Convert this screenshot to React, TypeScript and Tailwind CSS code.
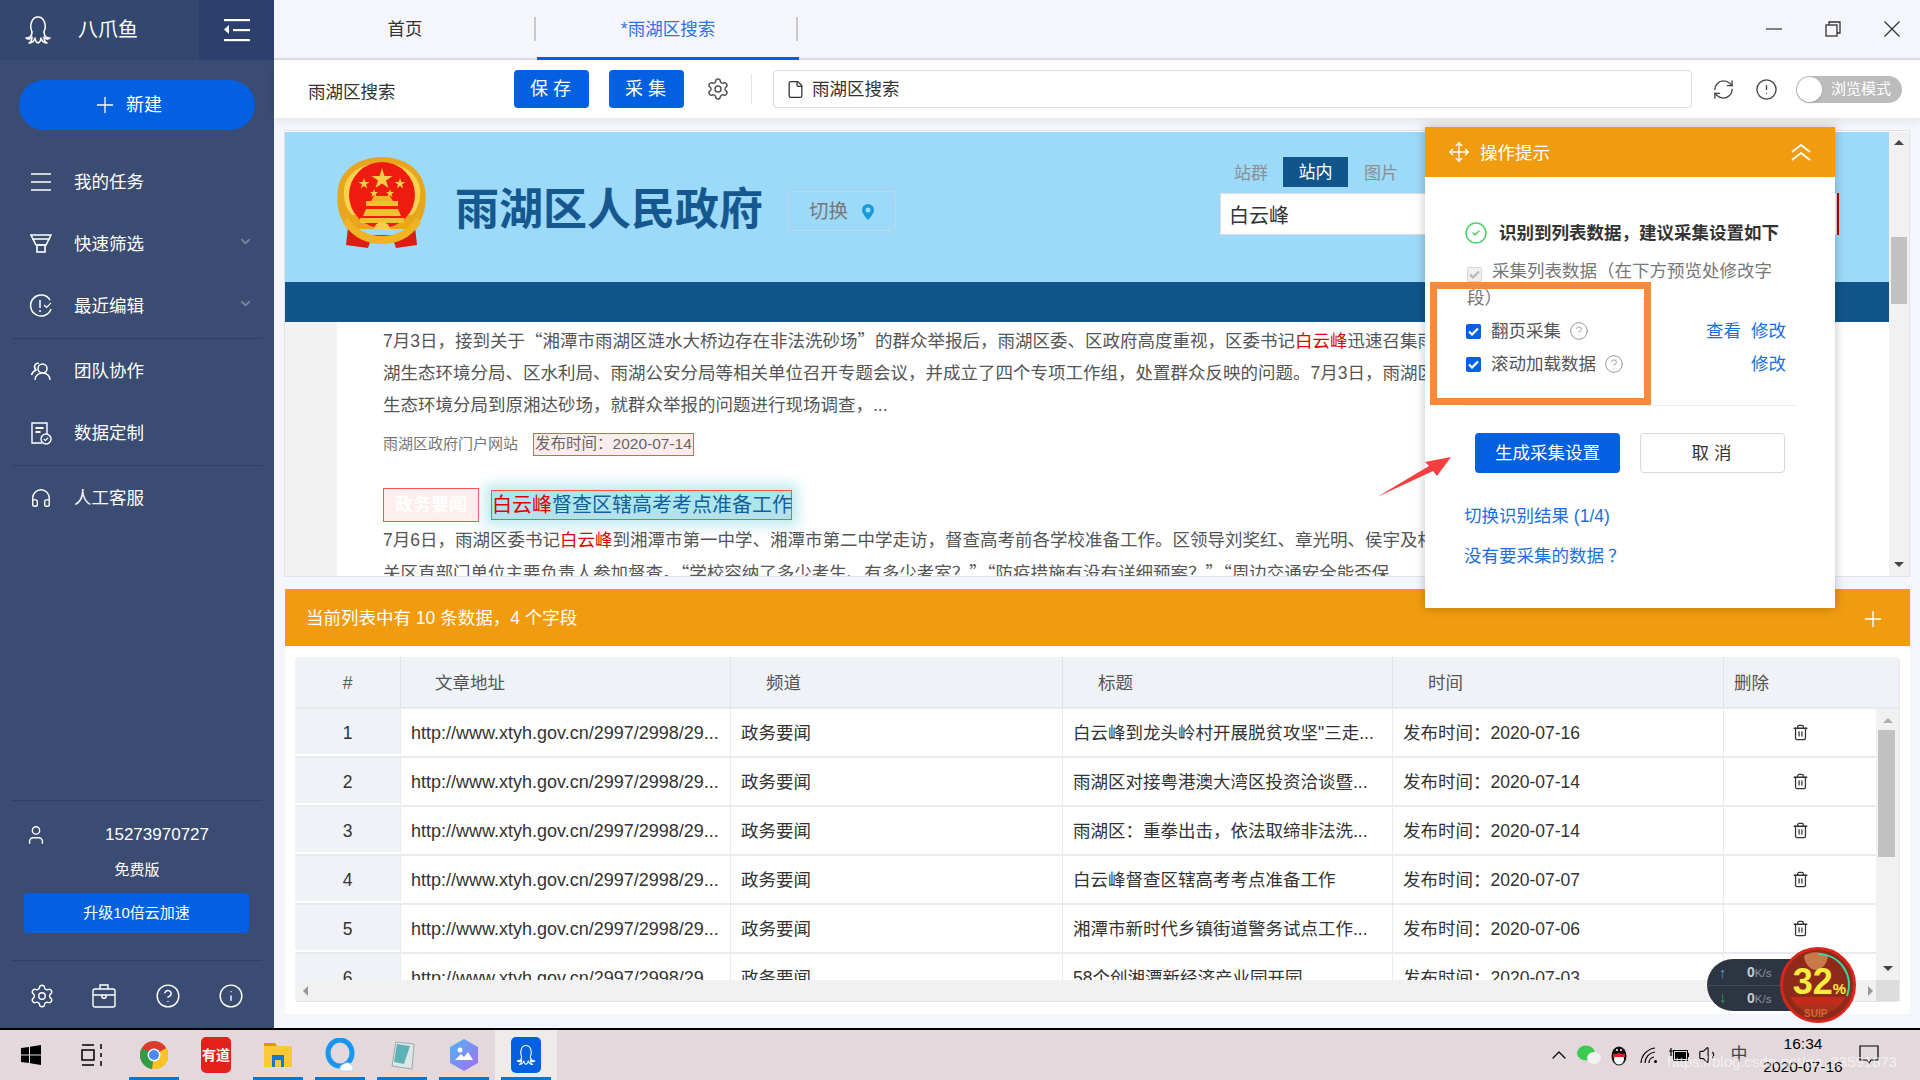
import { ChevronDown, CircleCheck, CircleHelp, CircleAlert, Info, Move, Plus, RefreshCw, Settings, Trash2, User, File, Headphones, ChevronUp, Volume1 } from 'lucide-react'

const Octopus = ({ size = 30 }: { size?: number }) => (
    <svg width={size} height={size} viewBox="0 0 30 30" fill="none" stroke="white" strokeWidth="1.5" strokeLinecap="round" strokeLinejoin="round">
        <path d="M9 17C6 10 9 2 15 2s9 8 6 15" />
        <path d="M9 17c0 4-2 6-6 6 2 2 5 1 6-1 0 3-1 5-3 6 3 0 5-2 6-5 0 2 1 4 3 5 2-1 3-3 3-5 1 3 3 5 6 5-2-1-3-3-3-6 1 2 4 3 6 1-4 0-6-2-6-6" />
    </svg>
)

const SidebarToggle = () => (
    <svg width="28" height="24" viewBox="0 0 28 24" fill="white">
        <rect x="1" y="1" width="26" height="2.2" />
        <rect x="10" y="11" width="17" height="2.2" />
        <rect x="1" y="21" width="26" height="2.2" />
        <path d="M6 7v9l-5-4.5z" />
    </svg>
)

const ListIcon = () => (
    <svg width="22" height="20" viewBox="0 0 22 20" fill="none" stroke="white" strokeWidth="1.6">
        <path d="M1 2h20M1 10h20M1 18h20" />
    </svg>
)

const FunnelIcon = () => (
    <svg width="22" height="20" viewBox="0 0 22 20" fill="none" stroke="white" strokeWidth="1.6">
        <path d="M1 1h20l-5 10H6zM2 5h18" />
        <rect x="7" y="11" width="8" height="7" />
    </svg>
)

const RecentIcon = () => (
    <svg width="24" height="24" viewBox="0 0 24 24" fill="none" stroke="white" strokeWidth="1.5">
        <path d="M21 6A10.5 10.5 0 1 0 22 15" />
        <path d="M11 6v8M11 16v2" />
        <path d="M15 11l2.500 2.500L22 9" strokeWidth="1.200" />
    </svg>
)

const TeamIcon = () => (
    <svg width="22" height="22" viewBox="0 0 22 22" fill="none" stroke="white" strokeWidth="1.5">
        <circle cx="12.500" cy="8.500" r="4.500" />
        <path d="M5 20c0-4 3-7 7.500-7s7.500 3 7.500 7" />
        <path d="M9 3.500A3.500 3.500 0 0 0 5 5c-1 2 0 4 1 5-2 1-4 3-4.500 5" />
    </svg>
)

const ReportIcon = () => (
    <svg width="22" height="24" viewBox="0 0 22 24" fill="none" stroke="white" strokeWidth="1.4">
        <path d="M12 22H2V2h15v11" />
        <path d="M5.500 7h8M5.500 11h5" strokeWidth="1.800" />
        <circle cx="16" cy="18" r="5" />
        <path d="M13.800 18l1.600 1.600 2.800-3" strokeWidth="1.200" />
    </svg>
)

const CaseIcon = () => (
    <svg width="24" height="26" viewBox="0 0 24 26" fill="none" stroke="white" strokeWidth="1.400">
        <rect x="1" y="6" width="22" height="18" rx="2" />
        <path d="M8 6V2h8v4M1 12h22" />
        <path d="M10 12v2.500l2 1 2-1V12" />
    </svg>
)

const Emblem = () => (
    <svg width="91" height="95" viewBox="0 0 91 95">
        <path d="M13 72C2 62 0 45 2 32 5 12 24 0 46 0s40 12 43 32c2 13 0 30-11 40z" fill="#e8a61c" />
        <path d="M8 32C10 16 26 6 46 6s36 10 38 26c1 10-2 20-8 26H16C10 52 7 42 8 32z" fill="#f9d24f" />
        <circle cx="46" cy="38" r="33" fill="#ee1b0f" />
        <path d="M12 70 10 88l22 3 3-9h22l3 9 21-3-2-18-16 8H30z" fill="#dd1d12" />
        <path d="M11 60c10 14 22 19 35 19s25-5 35-19l4 6C74 82 60 87 46 87S18 82 7 66z" fill="#f0b323" />
        <path d="M30 52h32l3 7H27z" fill="#f3c12e" />
        <rect x="30" y="44" width="32" height="5" fill="#f3c12e" />
        <path d="M35 44l3-5h16l3 5z" fill="#f0b323" />
        <rect x="24" y="61" width="44" height="5" fill="#f3c12e" />
        <path d="M38 73a8 8 0 0 1 16 0z" fill="#f8cf4a" />
        <polygon points="46,11 48.500,19 56.500,19 50,23.500 52.500,31 46,26.500 39.500,31 42,23.500 35.500,19 43.500,19" fill="#f6cd45" />
        <polygon points="28,21 29.300,25 33.500,25 30,27.500 31.300,31.500 28,29 24.700,31.500 26,27.500 22.500,25 26.700,25" fill="#f6cd45" />
        <polygon points="64,21 65.300,25 69.500,25 66,27.500 67.300,31.500 64,29 60.700,31.500 62,27.500 58.500,25 62.700,25" fill="#f6cd45" />
        <polygon points="38,32 39,35 42,35 39.700,37 40.500,40 38,38.200 35.500,40 36.300,37 34,35 37,35" fill="#f6cd45" />
        <polygon points="54,32 55,35 58,35 55.700,37 56.500,40 54,38.200 51.500,40 52.300,37 50,35 53,35" fill="#f6cd45" />
    </svg>
)

const Check = ({ disabled = false }: { disabled?: boolean }) => (
    <span className={`inline-flex w-[15px] h-[15px] shrink-0 rounded-[2px] items-center justify-center ${disabled ? 'bg-[#f0f0f0] border border-[#d5d5d5]' : 'bg-[#0360e0]'}`}>
        <svg width="11" height="9" viewBox="0 0 11 9" fill="none" stroke={disabled ? '#b8b8b8' : 'white'} strokeWidth="2.200">
            <path d="M1 4.500l3 3 6-6" />
        </svg>
    </span>
)

const navTop = [
    { label: '我的任务', icon: <ListIcon /> },
    { label: '快速筛选', icon: <FunnelIcon />, arrow: true },
    { label: '最近编辑', icon: <RecentIcon />, arrow: true },
]

const NavItem = ({ label, icon, arrow }: { label: string; icon: React.ReactNode; arrow?: boolean }) => (
    <div className="h-[62px] flex items-center relative text-white text-[17.500px] font-normal">
        <div className="w-[74px] shrink-0 pl-[16px]">
            <div className="w-[50px] flex justify-center">{icon}</div>
        </div>
        <span>{label}</span>
        {arrow && <ChevronDown size={15} strokeWidth={2.500} className="absolute right-[21px] top-[21px] text-[#7d8aa5]" />}
    </div>
)

const Sidebar = () => (
    <aside className="w-[274px] shrink-0 bg-[#3a4c72] flex flex-col">
        <div className="h-[60px] flex bg-[#34476e]">
            <div className="flex-1 flex items-center pl-[23px]">
                <Octopus />
                <span className="ml-[25px] text-white text-[20px]">八爪鱼</span>
            </div>
            <div className="w-[75px] bg-[#2d3f6c] flex items-center justify-center">
                <SidebarToggle />
            </div>
        </div>
        <button className="mt-[20px] mx-[19px] h-[50px] rounded-full bg-[#0360e0] text-white text-[18px] flex items-center justify-center gap-[8px] pr-[20px]">
            <Plus size={26} strokeWidth={1.200} />
            新建
        </button>
        <div className="mt-[21px]">
            {navTop.map((item) => <NavItem key={item.label} {...item} />)}
        </div>
        <div className="mx-[12px] mt-[1px] h-px bg-[#2f3f62]" />
        <div className="mt-[1px]">
            <NavItem label="团队协作" icon={<TeamIcon />} />
            <NavItem label="数据定制" icon={<ReportIcon />} />
        </div>
        <div className="mx-[12px] mt-[1px] mb-[1px] h-px bg-[#2f3f62]" />
        <NavItem label="人工客服" icon={<Headphones size={22} strokeWidth={1.500} />} />
        <div className="mt-auto">
            <div className="mx-[12px] h-px bg-[#2f3f62]" />
            <div className="mt-[21px] h-[26px] flex items-center text-white text-[17px]">
                <User size={22} strokeWidth={1.500} className="ml-[25px]" />
                <span className="ml-[58px]">15273970727</span>
            </div>
            <div className="mt-[9px] h-[26px] leading-[26px] text-center text-white text-[15px]">免费版</div>
            <button className="mt-[10px] ml-[24px] w-[225px] h-[40px] rounded-[4px] bg-[#0360e0] text-white text-[15px] block">升级10倍云加速</button>
            <div className="mx-[12px] mt-[27px] h-px bg-[#2f3f62]" />
            <div className="mt-[17px] mb-[14px] h-[36px] flex items-center text-white pl-[29px] gap-[37px]">
                <Settings size={26} strokeWidth={1.300} />
                <CaseIcon />
                <CircleHelp size={26} strokeWidth={1.300} className="ml-[2px]" />
                <Info size={26} strokeWidth={1.300} />
            </div>
        </div>
    </aside>
)

const TopTabs = () => (
    <div className="h-[60px] flex items-center border-b-2 border-[#dcdde3] bg-[#f5f6fb] relative">
        <div className="w-[262px] h-[24px] flex items-center justify-center border-r-2 border-[#c8c8c8] text-[17.500px] text-[#333] pl-[2px]">首页</div>
        <div className="w-[262px] h-[24px] flex items-center justify-center border-r-2 border-[#c8c8c8] text-[17.500px] text-[#2c73e6] pl-[4px]">*雨湖区搜索</div>
        <div className="absolute left-[263px] bottom-[-2px] w-[262px] h-[3px] bg-[#0360e0]" />
        <div className="ml-auto flex items-center gap-[43px] pr-[20px] text-[#333]">
            <svg width="16" height="16" viewBox="0 0 16 16" stroke="currentColor" strokeWidth="1.200">
                <path d="M0 8h16" />
            </svg>
            <svg width="16" height="16" viewBox="0 0 16 16" fill="none" stroke="currentColor" strokeWidth="1.300">
                <rect x="1" y="4" width="11" height="11" />
                <path d="M4 4V1h11v11h-3" />
            </svg>
            <svg width="16" height="16" viewBox="0 0 16 16" stroke="currentColor" strokeWidth="1.300">
                <path d="M0.500 0.500l15 15M15.500 0.500l-15 15" />
            </svg>
        </div>
    </div>
)

const Toolbar = () => (
    <div className="h-[58px] bg-white flex items-center pl-[34px] shadow-[0_3px_8px_rgba(0,0,0,0.08)] relative">
        <div className="w-[206px] text-[17.500px] text-[#333] pt-[6px]">雨湖区搜索</div>
        <div className="flex gap-[20px]">
            <button className="w-[75px] h-[38px] rounded-[4px] bg-[#0360e0] text-white text-[18px] tracking-[5px] pl-[3px]">保存</button>
            <button className="w-[75px] h-[38px] rounded-[4px] bg-[#0360e0] text-white text-[18px] tracking-[5px] pl-[3px]">采集</button>
        </div>
        <Settings size={24} strokeWidth={1.500} className="ml-[22px] text-[#555]" />
        <div className="ml-[21px] w-px h-[30px] bg-[#e4e4e4]" />
        <div className="ml-[21px] w-[919px] h-[38px] rounded-[4px] border border-[#dcdcdc] flex items-center pl-[12px] text-[17.500px] text-[#333]">
            <File size={19} strokeWidth={1.600} />
            <span className="ml-[7px]">雨湖区搜索</span>
        </div>
        <RefreshCw size={23} strokeWidth={1.400} className="ml-[20px] text-[#444]" />
        <CircleAlert size={23} strokeWidth={1.400} className="ml-[20px] text-[#444]" />
        <div className="ml-[18px] w-[106px] h-[27px] rounded-full bg-[#bcbcbc] flex items-center">
            <span className="w-[25px] h-[25px] rounded-full bg-white ml-px shadow" />
            <span className="ml-[9px] text-white text-[15px]">浏览模式</span>
        </div>
    </div>
)

const Hit = () => <span className="text-[#e00000]">白云峰</span>

// curly quotes need the CJK face, Liberation draws them half width
const Q = ({ children }: { children: string }) => <span className="font-['Noto_Sans_CJK_SC',sans-serif]">{children}</span>

const SitePreview = () => (
    <div className="mt-[12px] ml-[10px] mr-[10px] h-[447px] border border-[#dfe3ee] pt-px flex bg-white overflow-hidden">
        <div className="flex-1 min-w-0 flex flex-col">
            <div className="h-[150px] shrink-0 bg-[#9dd9f8] flex items-start">
                <div className="ml-[51px] mt-[25px]"><Emblem /></div>
                <div className="ml-[28px] mt-[48px] text-[44px] leading-[60px] font-bold text-[#15588f] whitespace-nowrap">雨湖区人民政府</div>
                <div className="ml-[25px] mt-[59px] w-[108px] h-[40px] rounded-[4px] border border-[#c7d6e0] flex items-center pl-[20px] pt-[1px] text-[19.500px] text-[#777]">
                    切换
                    <svg className="ml-[14px]" width="12" height="16" viewBox="0 0 12 16">
                        <path fillRule="evenodd" d="M6 0a6 6 0 0 1 6 6c0 4-6 10-6 10S0 10 0 6a6 6 0 0 1 6-6zm0 3.500a2.500 2.500 0 1 0 0 5 2.500 2.500 0 0 0 0-5z" fill="#1b9ad8" />
                    </svg>
                </div>
                <div className="ml-[324px] w-[619px] pt-[25px]">
                    <div className="flex items-center h-[30px] text-[17px] text-[#8a8f93]">
                        <span className="ml-[14px] pt-[3px]">站群</span>
                        <span className="ml-[15px] w-[65px] h-[30px] bg-[#11568a] text-white flex items-center justify-center pt-[2px]">站内</span>
                        <span className="ml-[16px] pt-[3px]">图片</span>
                    </div>
                    <div className="mt-[6px] h-[42px] flex">
                        <div className="flex-1 bg-white border border-[#dcdcdc] pl-[8px] pt-[4px] flex items-center text-[20px] text-[#333]">白云峰</div>
                        <div className="w-[2px] bg-[#b70000]" />
                    </div>
                </div>
            </div>
            <div className="h-[40px] shrink-0 bg-[#11568a]" />
            <div className="flex-1 min-h-0 flex">
                <div className="w-[52px] shrink-0 bg-[#f2f2f2]" />
                <div className="flex-1 min-w-0 pl-[46px] text-[17.500px] leading-[32px] text-[#555] whitespace-nowrap overflow-hidden">
                    <div className="mt-[2px]">7月3日，接到关于<Q>“</Q>湘潭市雨湖区涟水大桥边存在非法洗砂场<Q>”</Q>的群众举报后，雨湖区委、区政府高度重视，区委书记<Hit />迅速召集雨</div>
                    <div>湖生态环境分局、区水利局、雨湖公安分局等相关单位召开专题会议，并成立了四个专项工作组，处置群众反映的问题。7月3日，雨湖区</div>
                    <div>生态环境分局到原湘达砂场，就群众举报的问题进行现场调查，...</div>
                    <div className="mt-[11px] h-[24px] flex items-center text-[15px] leading-[22px] text-[#777]">
                        <span>雨湖区政府门户网站</span>
                        <span className="ml-[15px] h-[23px] px-px border border-[#ff5050] bg-[#ffecec] text-[15.500px] text-[#666] flex items-center">发布时间：2020-07-14</span>
                    </div>
                    <div className="mt-[32px] h-[34px] flex items-center">
                        <span className="w-[96px] h-[34px] bg-[#ffeeee] border border-[#ff5050] text-white font-bold text-[18px] flex items-center justify-center">政务要闻</span>
                        <span className="ml-[12px] w-[301px] h-[30px] bg-[#aee5ec] border border-[#ff5050] text-[20px] leading-[28px] text-[#11609a] shadow-[0_0_12px_6px_rgba(174,229,236,0.8)]"><Hit />督查区辖高考考点准备工作</span>
                    </div>
                    <div className="mt-[2px]">7月6日，雨湖区委书记<Hit />到湘潭市第一中学、湘潭市第二中学走访，督查高考前各学校准备工作。区领导刘奖红、章光明、侯宇及相</div>
                    <div>关区直部门单位主要负责人参加督查。<Q>“</Q>学校容纳了多少考生、有多少考室？<Q>”“</Q>防疫措施有没有详细预案？<Q>”“</Q>周边交通安全能否保</div>
                </div>
            </div>
        </div>
        <div className="w-[20px] shrink-0 bg-[#f1f1f1] relative">
            <div className="absolute top-[8px] left-[5px] w-0 h-0 border-x-[5px] border-x-transparent border-b-[5px] border-b-[#444]" />
            <div className="absolute top-[105px] left-[2px] w-[16px] h-[67px] bg-[#c1c1c1]" />
            <div className="absolute bottom-[9px] left-[5px] w-0 h-0 border-x-[5px] border-x-transparent border-t-[5px] border-t-[#444]" />
        </div>
    </div>
)

const rows = [
    ['1', '白云峰到龙头岭村开展脱贫攻坚"三走...', '发布时间：2020-07-16'],
    ['2', '雨湖区对接粤港澳大湾区投资洽谈暨...', '发布时间：2020-07-14'],
    ['3', '雨湖区：重拳出击，依法取缔非法洗...', '发布时间：2020-07-14'],
    ['4', '白云峰督查区辖高考考点准备工作', '发布时间：2020-07-07'],
    ['5', '湘潭市新时代乡镇街道警务试点工作...', '发布时间：2020-07-06'],
    ['6', '58个创湘潭新经济产业园开园', '发布时间：2020-07-03'],
]

const url = 'http://www.xtyh.gov.cn/2997/2998/29...'

const DataTable = () => (
    <div className="bg-white h-[368px] pt-[11px] px-[10px] ml-[11px] mr-[10px]">
        <div className="h-[345px] rounded-t-[4px] border-r border-[#e8e8e8] flex flex-col overflow-hidden text-[17.500px] text-[#333]">
            <div className="h-[52px] shrink-0 bg-[#eff2f7] border-b-2 border-[#e8eaee] grid grid-cols-[106px_330px_332px_330px_331px_176px] items-center text-[#555]">
                <div className="h-full flex items-center justify-center border-r border-[#e0e3e8] pt-[3px]">#</div>
                <div className="h-full flex items-center pl-[34px] border-r border-[#e0e3e8] pt-[3px]">文章地址</div>
                <div className="h-full flex items-center pl-[35px] border-r border-[#e0e3e8] pt-[3px]">频道</div>
                <div className="h-full flex items-center pl-[35px] border-r border-[#e0e3e8] pt-[3px]">标题</div>
                <div className="h-full flex items-center pl-[35px] border-r border-[#e0e3e8] pt-[3px]">时间</div>
                <div className="h-full flex items-center pl-[10px] pt-[3px]">删除</div>
            </div>
            <div className="h-[271px] shrink-0 flex overflow-hidden">
                <div className="flex-1 min-w-0">
                    {rows.map(([n, title, time]) => (
                        <div key={n} className="h-[49px] border-b-2 border-[#e8eaee] grid grid-cols-[106px_330px_332px_330px_331px_153px] items-center">
                            <div className="h-full flex items-center justify-center bg-[#eff2f7] border-r border-[#e8eaee] border-b-2 border-b-white pt-[3px]">{n}</div>
                            <div className="h-full flex items-center pl-[10px] border-r border-[#e8eaee] whitespace-nowrap text-[18px] pt-[1px]">{url}</div>
                            <div className="h-full flex items-center pl-[10px] border-r border-[#e8eaee] pt-[1px]">政务要闻</div>
                            <div className="h-full flex items-center pl-[10px] border-r border-[#e8eaee] whitespace-nowrap pt-[1px]">{title}</div>
                            <div className="h-full flex items-center pl-[10px] border-r border-[#e8eaee] whitespace-nowrap pt-[1px]">{time}</div>
                            <div className="h-full flex items-center justify-center"><Trash2 size={17} strokeWidth={1.800} /></div>
                        </div>
                    ))}
                </div>
                <div className="w-[23px] shrink-0 bg-[#f1f1f1] relative">
                    <div className="absolute top-[9px] left-[7px] w-0 h-0 border-x-[5px] border-x-transparent border-b-[5px] border-b-[#b0b0b0]" />
                    <div className="absolute top-[21px] left-[2px] w-[17px] h-[127px] bg-[#c1c1c1]" />
                    <div className="absolute bottom-[9px] left-[7px] w-0 h-0 border-x-[5px] border-x-transparent border-t-[5px] border-t-[#444]" />
                </div>
            </div>
            <div className="h-[22px] shrink-0 bg-[#f1f1f1] border-b border-[#e4e4e4] rounded-b-[4px] relative">
                <div className="absolute left-[8px] top-[6px] w-0 h-0 border-y-[5px] border-y-transparent border-r-[5px] border-r-[#999]" />
                <div className="absolute right-[26px] top-[6px] w-0 h-0 border-y-[5px] border-y-transparent border-l-[5px] border-l-[#999]" />
                <div className="absolute right-0 top-0 w-[23px] h-full bg-[#dcdcdc]" />
            </div>
        </div>
    </div>
)

const TipPanel = () => (
    <div className="absolute left-[1425px] top-[127px] w-[410px] h-[481px] bg-white shadow-[0_0_10px_rgba(0,0,0,0.25)]">
        <div className="h-[50px] bg-[#f19c0e] flex items-center text-white text-[17.500px] pl-[23px]">
            <Move size={22} strokeWidth={1.500} />
            <span className="ml-[10px] pt-[2px]">操作提示</span>
            <svg className="ml-auto mr-[24px]" width="20" height="18" viewBox="0 0 20 18" fill="none" stroke="white" strokeWidth="1.800">
                <path d="M1 9l9-7 9 7M1 17l9-7 9 7" />
            </svg>
        </div>
        <div className="pl-[39px]">
            <div className="mt-[44px] h-[24px] flex items-center">
                <CircleCheck size={24} strokeWidth={1.500} className="text-[#4ccf6a]" />
                <span className="ml-[11px] text-[17.500px] font-bold text-[#333] whitespace-nowrap">识别到列表数据，建议采集设置如下</span>
            </div>
            <div className="mt-[14px] ml-[3px] w-[323px] text-[17.500px] leading-[25px] text-[#777]">
                <span className="inline-block align-[-2px]"><Check disabled /></span>
                <span className="ml-[10px]">采集列表数据（在下方预览处修改字段）</span>
            </div>
            <div className="mt-[7px] ml-[2px] w-[320px] h-[26px] flex items-center text-[17.500px] text-[#555]">
                <Check />
                <span className="ml-[10px]">翻页采集</span>
                <CircleHelp size={20} strokeWidth={1.200} className="ml-[8px] text-[#999]" />
                <span className="ml-auto text-[#1a6fe0]">查看</span>
                <span className="ml-[10px] text-[#1a6fe0]">修改</span>
            </div>
            <div className="mt-[7px] ml-[2px] w-[320px] h-[26px] flex items-center text-[17.500px] text-[#555]">
                <Check />
                <span className="ml-[10px]">滚动加载数据</span>
                <CircleHelp size={20} strokeWidth={1.200} className="ml-[8px] text-[#999]" />
                <span className="ml-auto text-[#1a6fe0]">修改</span>
            </div>
            <div className="mt-[28px] w-[332px] h-px bg-[#ececf2]" />
            <div className="mt-[27px] ml-[11px] flex gap-[20px] text-[17.500px]">
                <button className="w-[145px] h-[40px] rounded-[4px] bg-[#0360e0] text-white">生成采集设置</button>
                <button className="w-[145px] h-[40px] rounded-[4px] border border-[#d8d8d8] bg-white text-[#333] tracking-[5px] pl-[3px]">取消</button>
            </div>
            <div className="mt-[30px] h-[26px] leading-[26px] text-[17.500px] text-[#1a6fe0]">切换识别结果 (1/4)</div>
            <div className="mt-[13px] h-[26px] leading-[26px] text-[17.500px] text-[#1a6fe0]">没有要采集的数据<span className="ml-[4px]"><Q>？</Q></span></div>
        </div>
    </div>
)

const SpeedWidget = () => (
    <div className="absolute left-[1707px] top-[947px] w-[150px] h-[78px]">
        <div className="absolute left-0 top-[12px] w-[100px] h-[52px] rounded-l-[26px] bg-[#2e3542] text-[#c8ccd2]">
            <div className="absolute left-[12px] top-[6px] text-[#39a0e0] text-[15px] leading-[16px] font-bold">↑</div>
            <div className="absolute left-[40px] top-[4px] text-[14px] leading-[18px] font-bold">0<span className="font-normal text-[11.500px] text-[#8c929b]">K/s</span></div>
            <div className="absolute left-0 top-[26px] w-[80px] h-px bg-[#454c59]" />
            <div className="absolute left-[12px] top-[30px] text-[#22b04a] text-[15px] leading-[16px] font-bold">↓</div>
            <div className="absolute left-[40px] top-[30px] text-[14px] leading-[18px] font-bold">0<span className="font-normal text-[11.500px] text-[#8c929b]">K/s</span></div>
        </div>
        <div className="absolute left-[73px] top-0 w-[76px] h-[76px] rounded-full bg-[#8e2a1a] border-[3px] border-[#d8261c] flex items-center justify-center overflow-visible">
            <svg className="absolute left-[-3px] top-[-3px]" width="76" height="76" viewBox="0 0 76 76" fill="none">
                <path d="M24 9c6-5 18-5 24 0-1 10-8 14-12 14S25 19 24 9z" fill="#c9784a" />
                <path d="M10 50h56l-6 8H16z" fill="#c22a1c" />
                <path d="M16 58h44a31 31 0 0 1-44 0z" fill="#a8331c" />
                <path d="M38 7a31 31 0 0 1 29 42" stroke="#38d9a0" strokeWidth="2" />
            </svg>
            <span className="relative text-[#f9ec3d] font-bold text-[36px] leading-[36px] font-['Liberation_Sans',sans-serif] ml-[3px]">32<span className="text-[15px]">%</span></span>
            <span className="absolute bottom-[1px] left-[21px] text-[10px] leading-[10px] font-bold text-[#d0683a]">SUIP</span>
        </div>
    </div>
)

const Arrow = () => (
    <svg className="absolute left-[1376px] top-[455px]" width="76" height="43" viewBox="0 0 76 43">
        <path d="M1 42 53 11 49 7 75 2 61 21 57 16z" fill="#f63e3e" />
    </svg>
)

const WinLogo = () => (
    <svg width="20" height="20" viewBox="0 0 20 20" fill="black">
        <path d="M0 3l8-1v7.500H0zM9 1.800 20 0v9.500H9zM0 10.500h8V18l-8-1zM9 10.500h11V20L9 18.300z" />
    </svg>
)

const TaskView = () => (
    <svg width="22" height="24" viewBox="0 0 22 24" fill="none" stroke="black" strokeWidth="1.500">
        <path d="M1 2h12M1 22h12M20 1v5M20 10v4M20 18v5" />
        <rect x="1" y="7" width="12" height="10" />
    </svg>
)

const Chrome = () => (
    <svg width="28" height="28" viewBox="0 0 28 28">
        <circle cx="14" cy="14" r="14" fill="#dc3c2e" />
        <path d="M14 14 2 7A14 14 0 0 0 12 27.900z" fill="#2f9e44" />
        <path d="M14 14 26.500 7A14 14 0 0 1 12 27.900z" fill="#f7c325" />
        <circle cx="14" cy="14" r="6.500" fill="white" />
        <circle cx="14" cy="14" r="5" fill="#4a8af4" />
    </svg>
)

const Slot = ({ children, bar, active, first }: { children: React.ReactNode; bar?: boolean; active?: boolean; first?: boolean }) => (
    <div className={`${first ? 'w-[61px]' : 'w-[62px]'} h-full relative flex items-center justify-center ${active ? 'bg-[#f0ebeb]' : ''}`}>
        {children}
        {bar && <div className="absolute bottom-0 left-[6px] right-[6px] h-[3px] bg-[#0078d4]" />}
    </div>
)

const TaskIcons = () => (
    <>
        <Slot first><WinLogo /></Slot>
        <Slot><TaskView /></Slot>
        <Slot bar><Chrome /></Slot>
        <Slot>
            <span className="w-[30px] h-[36px] rounded-[5px] bg-[#e5211a] text-white text-[14px] font-bold flex items-center justify-center">有道</span>
        </Slot>
        <Slot bar>
            <svg width="28" height="28" viewBox="0 0 28 28">
                <path d="M0 2h11l2 3H0z" fill="#d99a06" />
                <rect y="5" width="28" height="21" fill="#fbc934" />
                <path d="M8 14h12v12h-3v-7h-6v7H8z" fill="#1577d3" />
            </svg>
        </Slot>
        <Slot bar>
            <svg width="30" height="34" viewBox="0 0 30 34">
                <ellipse cx="15" cy="15" rx="12" ry="13" fill="none" stroke="#1b96ee" strokeWidth="5" />
                <path d="M15 32a5 5 0 0 1 4-6 5 5 0 0 1 8 2 3 3 0 0 1 0 5H16z" fill="white" stroke="#a8d8f8" />
            </svg>
        </Slot>
        <Slot bar>
            <svg width="28" height="32" viewBox="0 0 28 32">
                <path d="M8 3l18 2-2 25-20-3z" fill="#dfe6e6" stroke="#8a9a9a" strokeWidth="0.800" />
                <path d="M9 5l13 2-6 18-10-2z" fill="#5fb1b8" />
            </svg>
        </Slot>
        <Slot bar>
            <svg width="28" height="32" viewBox="0 0 28 32">
                <defs>
                    <linearGradient id="photoHex" x1="0" y1="0" x2="1" y2="1">
                        <stop offset="0" stopColor="#4cb6f5" />
                        <stop offset="1" stopColor="#a86cf0" />
                    </linearGradient>
                </defs>
                <path d="M14 0l14 8v16l-14 8L0 24V8z" fill="url(#photoHex)" />
                <circle cx="10" cy="11" r="2.500" fill="white" />
                <path d="M5 21l6-6 3 3 4-5 5 8z" fill="white" />
            </svg>
        </Slot>
        <Slot bar active>
            <span className="w-[30px] h-[36px] rounded-[5px] bg-[#0360e0] flex items-center justify-center"><Octopus size={22} /></span>
        </Slot>
    </>
)

const Tray = ({ children }: { children: React.ReactNode }) => (
    <div className="w-[30px] h-full flex items-center justify-center">{children}</div>
)

const Taskbar = () => (
    <div className="h-[52px] shrink-0 border-t-2 border-black bg-[#e3d9dc] flex items-center relative">
        <TaskIcons />
        <div className="ml-auto h-full flex items-center pr-[34px]">
            <Tray><ChevronUp size={24} strokeWidth={1.200} /></Tray>
            <Tray>
                <svg width="24" height="20" viewBox="0 0 24 20">
                    <ellipse cx="9" cy="8" rx="9" ry="7.500" fill="#3ccb52" />
                    <ellipse cx="17" cy="13" rx="7" ry="6" fill="#f2f2f2" />
                </svg>
            </Tray>
            <Tray>
                <svg width="18" height="22" viewBox="0 0 18 22">
                    <ellipse cx="9" cy="12" rx="7.500" ry="9.500" fill="#111" />
                    <ellipse cx="9" cy="15" rx="5" ry="5.500" fill="white" />
                    <rect x="3" y="10" width="12" height="3" fill="#d8261c" />
                    <circle cx="7" cy="6" r="1" fill="white" />
                    <circle cx="11" cy="6" r="1" fill="white" />
                </svg>
            </Tray>
            <Tray>
                <svg width="18" height="18" viewBox="0 0 18 18" fill="none" stroke="black" strokeWidth="1.200">
                    <path d="M1 17A16 16 0 0 1 15 2M5 17A11 11 0 0 1 15 6M9 17a6 6 0 0 1 5-6" />
                    <circle cx="15.500" cy="15.500" r="1.500" fill="black" stroke="none" />
                </svg>
            </Tray>
            <Tray>
                <svg width="20" height="14" viewBox="0 0 20 14">
                    <path d="M0 3h4M2 0v8" stroke="black" strokeWidth="1.200" />
                    <rect x="4.500" y="2.500" width="14" height="10" fill="none" stroke="black" />
                    <rect x="6" y="4" width="11" height="7" fill="black" />
                    <rect x="19" y="5" width="1" height="4" />
                </svg>
            </Tray>
            <Tray><Volume1 size={22} strokeWidth={1.200} /></Tray>
            <Tray>
                <span className="text-[17px] text-[#444]">中</span>
            </Tray>
            <div className="w-[98px] text-center text-[15.500px] leading-[23px] text-black">
                <div>16:34</div>
                <div>2020-07-16</div>
            </div>
            <div className="w-[34px] flex justify-center">
                <svg width="20" height="20" viewBox="0 0 20 20" fill="none" stroke="black" strokeWidth="1.200">
                    <path d="M1 1h18v14h-7l-2 3-2-3H1z" />
                </svg>
            </div>
        </div>
        <div className="absolute left-[1667px] top-[22px] text-[15px] leading-[20px] text-white/60 whitespace-nowrap">https://blog.csdn.net/qq_33591873</div>
    </div>
)

export default function App() {
    return (
        <div className="w-[1920px] h-[1080px] relative flex flex-col overflow-hidden bg-[#f5f6fb] font-['Liberation_Sans','Noto_Sans_CJK_SC',sans-serif]">
            <div className="h-[1028px] flex">
                <Sidebar />
                <main className="flex-1 min-w-0 flex flex-col">
                    <TopTabs />
                    <Toolbar />
                    <SitePreview />
                    <div className="mt-[12px] ml-[11px] mr-[10px] h-[57px] shrink-0 bg-[#f19c0e] flex items-center justify-between pl-[21px] pr-[24px] pt-[2px] text-white text-[17.500px]">
                        <span>当前列表中有 10 条数据，4 个字段</span>
                        <Plus size={26} strokeWidth={1.300} />
                    </div>
                    <DataTable />
                </main>
            </div>
            <Taskbar />
            <TipPanel />
            <div className="absolute left-[1430px] top-[282px] w-[221px] h-[123px] border-[7px] border-[#f98a3a]" />
            <Arrow />
            <SpeedWidget />
        </div>
    )
}
